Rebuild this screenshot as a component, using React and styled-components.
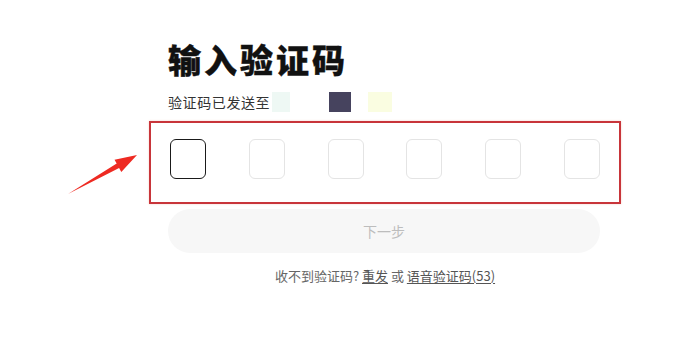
import React from "react";
import styled, { createGlobalStyle } from "styled-components";

const Global = createGlobalStyle`
  html, body { margin: 0; padding: 0; background: #fff; }
  body { font-family: "Noto Sans CJK SC", "Noto Sans", sans-serif; }
`;

const Page = styled.div`
  position: relative;
  width: 695px;
  height: 340px;
  overflow: hidden;
  background: #fff;
`;

const Column = styled.div`
  display: flex;
  flex-direction: column;
  width: 432px;
  margin-left: 168px;
  padding-top: 42px;
`;

const Title = styled.h1`
  margin: 0;
  font-size: 33px;
  line-height: 34px;
  height: 34px;
  font-weight: 900;
  letter-spacing: 3px;
  color: #111;
  -webkit-text-stroke: 0.4px #111;
`;

const SubRow = styled.div`
  display: flex;
  align-items: center;
  height: 20px;
  margin-top: 16px;
  font-size: 14px;
  letter-spacing: 0.6px;
  color: #333;
`;

const Mask = styled.span`
  display: inline-block;
  width: ${(p) => p.$w}px;
  height: 20px;
  margin-left: ${(p) => p.$ml}px;
  background: ${(p) => p.$c};
`;

const Frame = styled.div`
  margin: 9px -21px 0 -19px;
  border: 2px solid #c8353a;
  box-shadow: 0 0 2px rgba(230, 120, 100, 0.35);
  padding: 16px 19px 23px 19px;
  display: flex;
  justify-content: space-between;
`;

const CodeBox = styled.div`
  width: 36px;
  height: 40px;
  box-sizing: border-box;
  border-radius: 6px;
  border: 1px solid ${(p) => (p.$active ? "#1a1a1a" : "#e4e4e4")};
  background: #fff;
`;

const NextButton = styled.button`
  margin-top: 5px;
  height: 44px;
  width: 432px;
  border: none;
  border-radius: 22px;
  background: #f7f7f7;
  color: #bdbdbd;
  font-family: "Noto Sans CJK SC", sans-serif;
  font-size: 14px;
  padding: 0;
`;

const Footer = styled.div`
  margin-top: 13px;
  text-align: center;
  font-size: 13px;
  line-height: 20px;
  color: #666;
  padding-left: 2px;
`;

const Link = styled.a`
  color: #555;
  text-decoration: underline;
  text-underline-offset: 2px;
`;

const ArrowSvg = styled.svg`
  position: absolute;
  left: 0;
  top: 0;
  width: 695px;
  height: 340px;
  pointer-events: none;
`;

export default function App() {
  return (
    <Page>
      <Global />
      <Column>
        <Title>输入验证码</Title>
        <SubRow>
          验证码已发送至
          <Mask $w={18} $ml={2} $c="#eef8f4" />
          <Mask $w={22} $ml={39} $c="#46435e" />
          <Mask $w={24} $ml={17} $c="#fafde1" />
        </SubRow>
        <Frame>
          {[0, 1, 2, 3, 4, 5].map((i) => (
            <CodeBox key={i} $active={i === 0} />
          ))}
        </Frame>
        <NextButton>下一步</NextButton>
        <Footer>
          收不到验证码? <Link>重发</Link> 或 <Link>语音验证码(53)</Link>
        </Footer>
      </Column>
      <ArrowSvg viewBox="0 0 695 340">
        <polygon
          points="68,194 119.1,168 121.3,171.9 137,155 114.5,159.7 116.7,163.6"
          fill="#ee2a22"
        />
      </ArrowSvg>
    </Page>
  );
}
